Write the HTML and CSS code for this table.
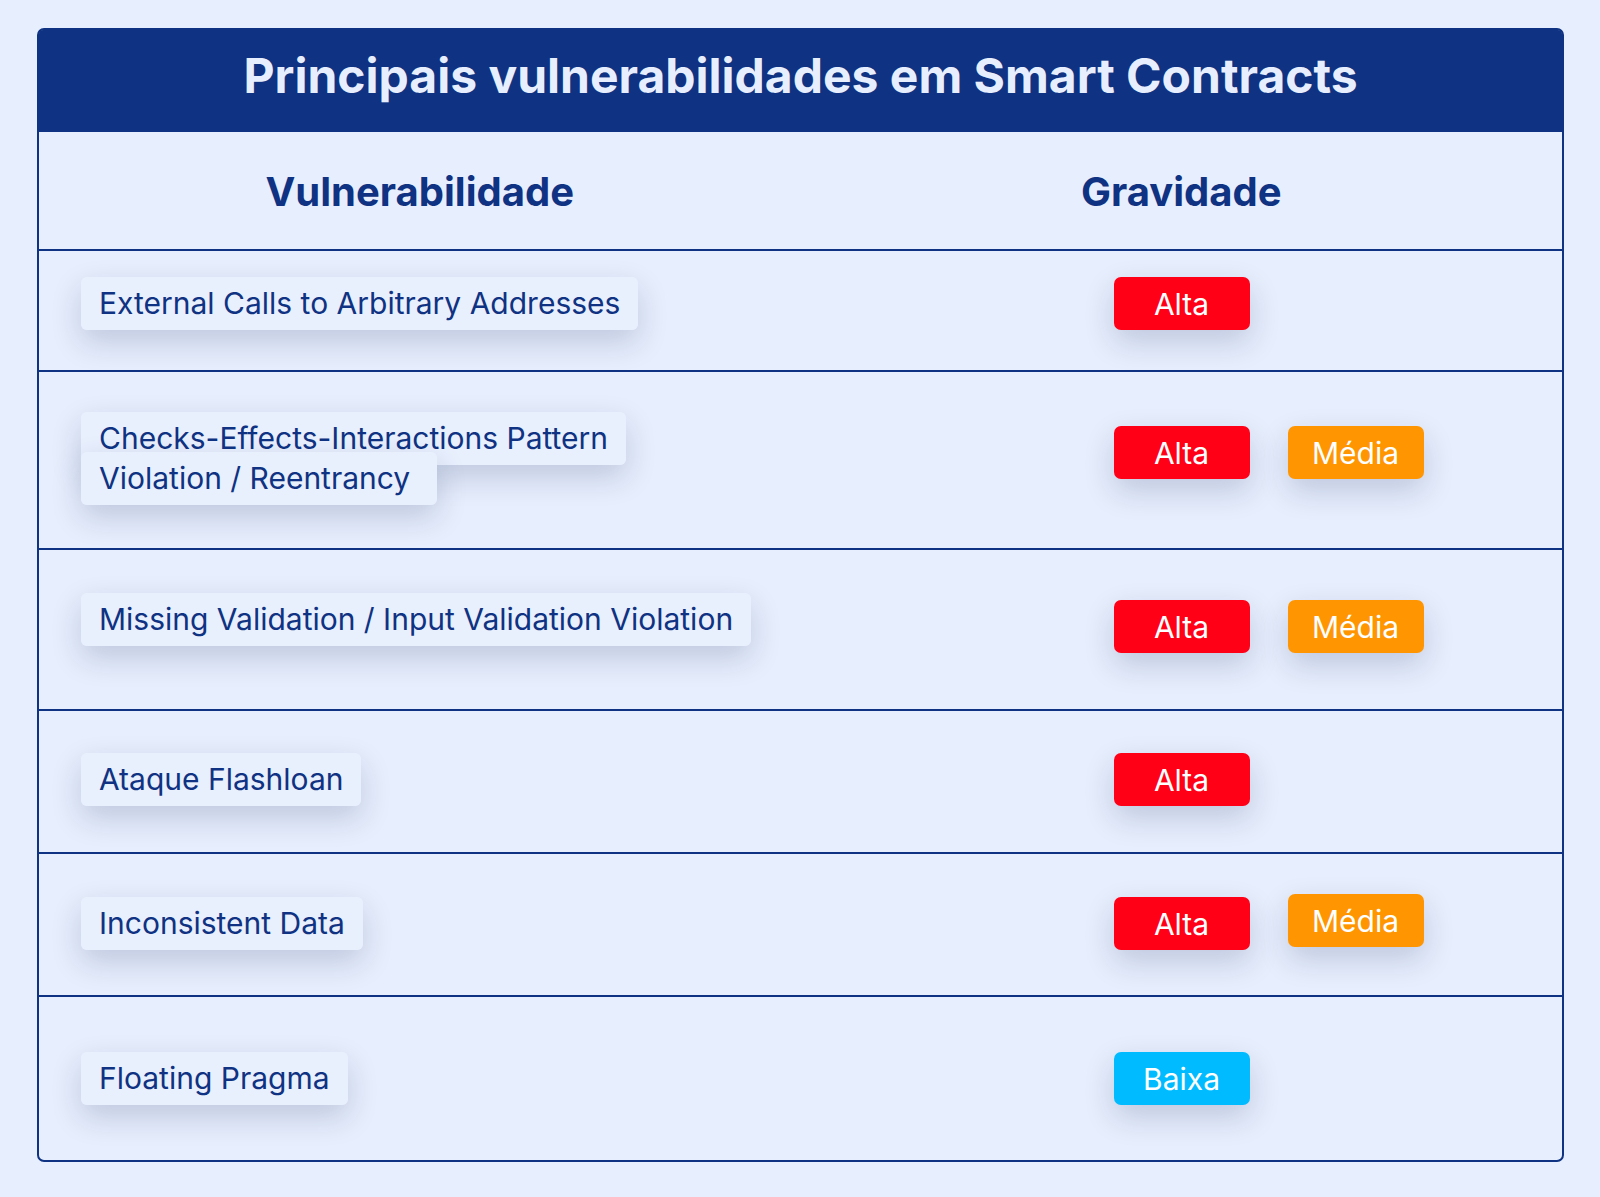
FILE: index.html
```html
<!DOCTYPE html>
<html lang="pt">
<head>
<meta charset="utf-8">
<title>Principais vulnerabilidades em Smart Contracts</title>
<link rel="stylesheet" href="styles.css">
</head>
<body>
  <main class="card">
    <header class="card-title">
      <h1>Principais vulnerabilidades em Smart Contracts</h1>
    </header>
    <div class="head-row">
      <div class="head-cell">Vulnerabilidade</div>
      <div class="head-cell">Gravidade</div>
    </div>
    <div class="rows">
      <div class="row">
        <div class="vuln"><span class="pill">External Calls to Arbitrary Addresses</span></div>
        <div class="levels">
          <span class="badge badge-high">Alta</span>
        </div>
      </div>
      <div class="row">
        <div class="vuln"><span class="pill">Checks-Effects-Interactions Pattern<br>Violation / Reentrancy&nbsp;</span></div>
        <div class="levels">
          <span class="badge badge-high">Alta</span>
          <span class="badge badge-mid">Média</span>
        </div>
      </div>
      <div class="row">
        <div class="vuln"><span class="pill">Missing Validation / Input Validation Violation</span></div>
        <div class="levels">
          <span class="badge badge-high">Alta</span>
          <span class="badge badge-mid">Média</span>
        </div>
      </div>
      <div class="row">
        <div class="vuln"><span class="pill">Ataque Flashloan</span></div>
        <div class="levels">
          <span class="badge badge-high">Alta</span>
        </div>
      </div>
      <div class="row">
        <div class="vuln"><span class="pill">Inconsistent Data</span></div>
        <div class="levels">
          <span class="badge badge-high">Alta</span>
          <span class="badge badge-mid badge-raised">Média</span>
        </div>
      </div>
      <div class="row">
        <div class="vuln"><span class="pill">Floating Pragma</span></div>
        <div class="levels">
          <span class="badge badge-low">Baixa</span>
        </div>
      </div>
    </div>
  </main>
</body>
</html>
```

FILE: styles.css
```css
* {
  box-sizing: border-box;
}

html, body {
  margin: 0;
  padding: 0;
}

body {
  background: #e7eefd;
  font-family: Inter, "Noto Sans", "Liberation Sans", sans-serif;
  color: #0f3282;
  width: 1600px;
  height: 1197px;
  overflow: hidden;
}

.card {
  margin: 28px 0 0 37px;
  width: 1527px;
  height: 1134px;
  border: 2px solid #0f3282;
  border-radius: 7px;
  background: #e7eefd;
}

.card-title {
  background: #0f3282;
  border-radius: 4px 4px 0 0;
  padding: 17px 0 27px;
  text-align: center;
}

.card-title h1 {
  margin: 0;
  font-size: 48px;
  line-height: 58px;
  font-weight: 700;
  color: #e7eefd;
}

.head-row {
  display: grid;
  grid-template-columns: 1fr 1fr;
  border-bottom: 2px solid #0f3282;
  padding: 36px 0 33px;
}

.head-cell {
  text-align: center;
  font-size: 40px;
  line-height: 48px;
  font-weight: 700;
  color: #0f3282;
}

.row {
  display: grid;
  grid-template-columns: 1fr 1fr;
  align-items: start;
  border-bottom: 2px solid #0f3282;
  padding: 42px 0 46px;
}

.row:last-child {
  border-bottom: none;
}

.row:nth-child(1) { padding: 26px 0 40px; }
.row:nth-child(2) { padding: 40px 0 43px; }
.row:nth-child(3) { padding: 43px 0 56px; }
.row:nth-child(4) { padding: 42px 0 46px; }
.row:nth-child(5) { padding: 43px 0 45px; }
.row:nth-child(6) { padding: 55px 0 55px; }

.vuln {
  padding: 6.5px 0 6.5px 42px;
  font-size: 30px;
  line-height: 40px;
  white-space: nowrap;
}

.pill {
  background: #e8effd;
  padding: 8.4px 18px;
  border-radius: 6px;
  color: #0f3282;
  box-shadow: 0 12px 30px rgba(30, 50, 100, 0.2);
  -webkit-box-decoration-break: clone;
  box-decoration-break: clone;
}

.levels {
  display: flex;
  align-items: flex-start;
  gap: 38px;
  padding-left: 313px;
}

.row:nth-child(2) .levels { margin-top: 14px; }
.row:nth-child(3) .levels { margin-top: 7px; }

.badge {
  width: 136px;
  height: 53px;
  display: inline-flex;
  align-items: center;
  justify-content: center;
  border-radius: 7px;
  color: #ffffff;
  font-size: 30px;
  line-height: 1;
  box-shadow: 0 12px 30px rgba(30, 50, 100, 0.2);
}

.badge-raised {
  margin-top: -3px;
}

.badge-high { background: #ff0016; }
.badge-mid { background: #ff9500; }
.badge-low { background: #00bbff; }
```
